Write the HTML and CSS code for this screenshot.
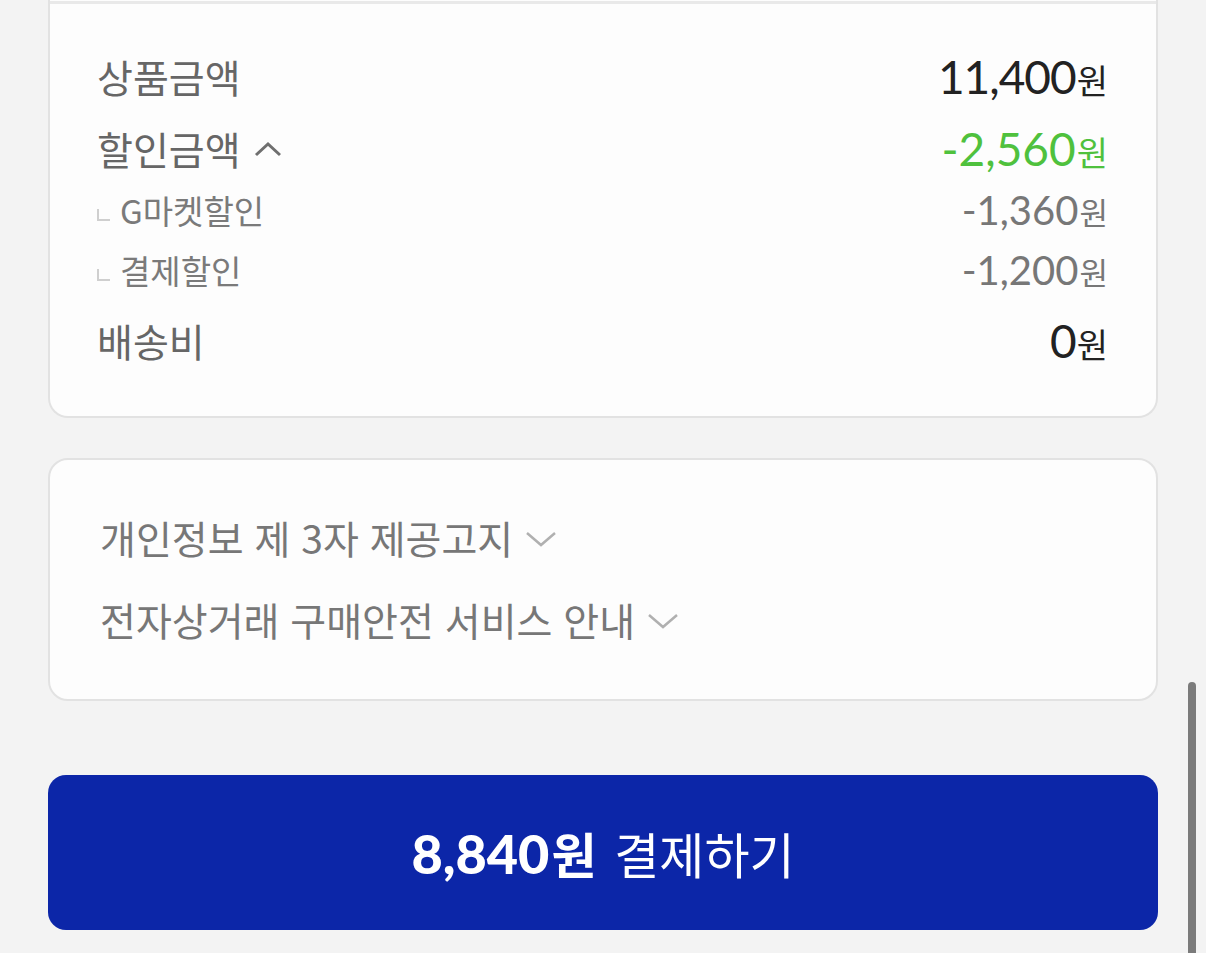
FILE: index.html
```html
<!DOCTYPE html>
<html lang="ko">
<head>
    <meta charset="UTF-8">
    <meta name="viewport" content="width=device-width, initial-scale=1.0">
    <title>결제하기</title>
    <link rel="stylesheet" href="styles.css">
</head>
<body>

    <div class="page">
        <div class="card summary">
            <div class="divider"></div>

            <div class="row">
                <span class="label">상품금액</span>
                <span class="amount">11,400<span class="won">원</span></span>
            </div>
            <div class="row">
                <span class="label">할인금액
                    <svg class="chevron-up" width="28" height="16" viewBox="0 0 28 16">
                        <path d="M2 14 L14 3 L26 14" fill="none" stroke="#6f6f6f" stroke-width="3"/>
                    </svg>
                </span>
                <span class="amount discount">-2,560<span class="won">원</span></span>
            </div>

            <div class="sub-list">
                <div class="sub-row">
                    <span class="sub-label"><i class="mark"></i>G마켓할인</span>
                    <span class="sub-amount">-1,360<span class="won">원</span></span>
                </div>
                <div class="sub-row">
                    <span class="sub-label"><i class="mark"></i>결제할인</span>
                    <span class="sub-amount">-1,200<span class="won">원</span></span>
                </div>
            </div>

            <div class="row">
                <span class="label">배송비</span>
                <span class="amount">0<span class="won">원</span></span>
            </div>
        </div>

        <div class="card notice">
            <div class="notice-row">
                개인정보 제 3자 제공고지
                <svg class="chevron-down" width="32" height="18" viewBox="0 0 32 18">
                    <path d="M2 3 L16 15 L30 3" fill="none" stroke="#b0b0b0" stroke-width="2.5"/>
                </svg>
            </div>
            <div class="notice-row">
                전자상거래 구매안전 서비스 안내
                <svg class="chevron-down" width="32" height="18" viewBox="0 0 32 18">
                    <path d="M2 3 L16 15 L30 3" fill="none" stroke="#b0b0b0" stroke-width="2.5"/>
                </svg>
            </div>
        </div>

        <button class="pay-btn"><b>8,840<span class="won">원</span></b> 결제하기</button>
    </div>

    <div class="scrollbar"></div>

</body>
</html>
```

FILE: styles.css
```css
body {
    margin: 0;
    background-color: #f3f3f3;
    font-family: "Noto Sans CJK KR", "Noto Sans", sans-serif;
    color: #666;
    height: 953px;
    overflow: hidden;
    position: relative;
}

.page {
    padding: 0 48px;
    display: flex;
    flex-direction: column;
}

.card {
    background-color: #fdfdfd;
    border: 2px solid #e2e2e2;
    border-radius: 20px;
}

.summary {
    border-top: none;
    border-top-left-radius: 0;
    border-top-right-radius: 0;
    padding: 0 48px 40px 47px;
}

.divider {
    height: 3px;
    margin: 1px -48px 36px -47px;
    background-color: #e9e9e9;
}

.row {
    height: 72px;
    display: flex;
    justify-content: space-between;
    align-items: center;
}

.label {
    font-size: 39px;
    color: #666;
    display: flex;
    align-items: center;
}

.chevron-up {
    margin-left: 13px;
    margin-top: 2px;
}

.amount {
    font-family: Lato, "Noto Sans CJK KR", sans-serif;
    font-size: 46px;
    color: #222;
    letter-spacing: -1px;
}

.won {
    font-family: "Noto Sans CJK KR", sans-serif;
    font-size: 34px;
    letter-spacing: 0;
    margin-left: 1px;
}

.discount {
    color: #4fc13d;
    letter-spacing: 0;
}

.sub-list {
    margin-top: -4px;
    padding-bottom: 4px;
}

.sub-row {
    height: 60px;
    display: flex;
    justify-content: space-between;
    align-items: center;
}

.sub-label {
    font-size: 33px;
    color: #7a7a7a;
    display: flex;
    align-items: center;
}

.mark {
    display: inline-block;
    width: 11px;
    height: 10px;
    border-left: 2px solid #cfcfcf;
    border-bottom: 2px solid #cfcfcf;
    margin: 10px 10px 0 0;
}

.sub-amount {
    font-family: Lato, "Noto Sans CJK KR", sans-serif;
    font-size: 40px;
    color: #777;
}

.sub-amount .won {
    font-size: 31px;
}

.notice {
    margin-top: 40px;
    padding: 36px 48px 39px 50px;
}

.notice-row {
    height: 82px;
    display: flex;
    align-items: center;
    font-size: 39px;
    color: #777;
}

.chevron-down {
    margin-left: 12px;
    margin-top: 4px;
}

.pay-btn {
    margin-top: 74px;
    height: 155px;
    border: none;
    border-radius: 18px;
    background-color: #0c26a8;
    color: #fff;
    font-family: "Noto Sans CJK KR", sans-serif;
    font-size: 49px;
    cursor: pointer;
}

.pay-btn b {
    font-family: Lato, "Noto Sans CJK KR", sans-serif;
    font-size: 54px;
    font-weight: 900;
    margin-right: 4px;
}

.pay-btn .won {
    font-size: 49px;
    font-weight: 700;
    margin-left: 2px;
}

.scrollbar {
    position: absolute;
    right: 10px;
    top: 682px;
    width: 8px;
    height: 280px;
    border-radius: 4px;
    background-color: #7b7b7b;
}
```
